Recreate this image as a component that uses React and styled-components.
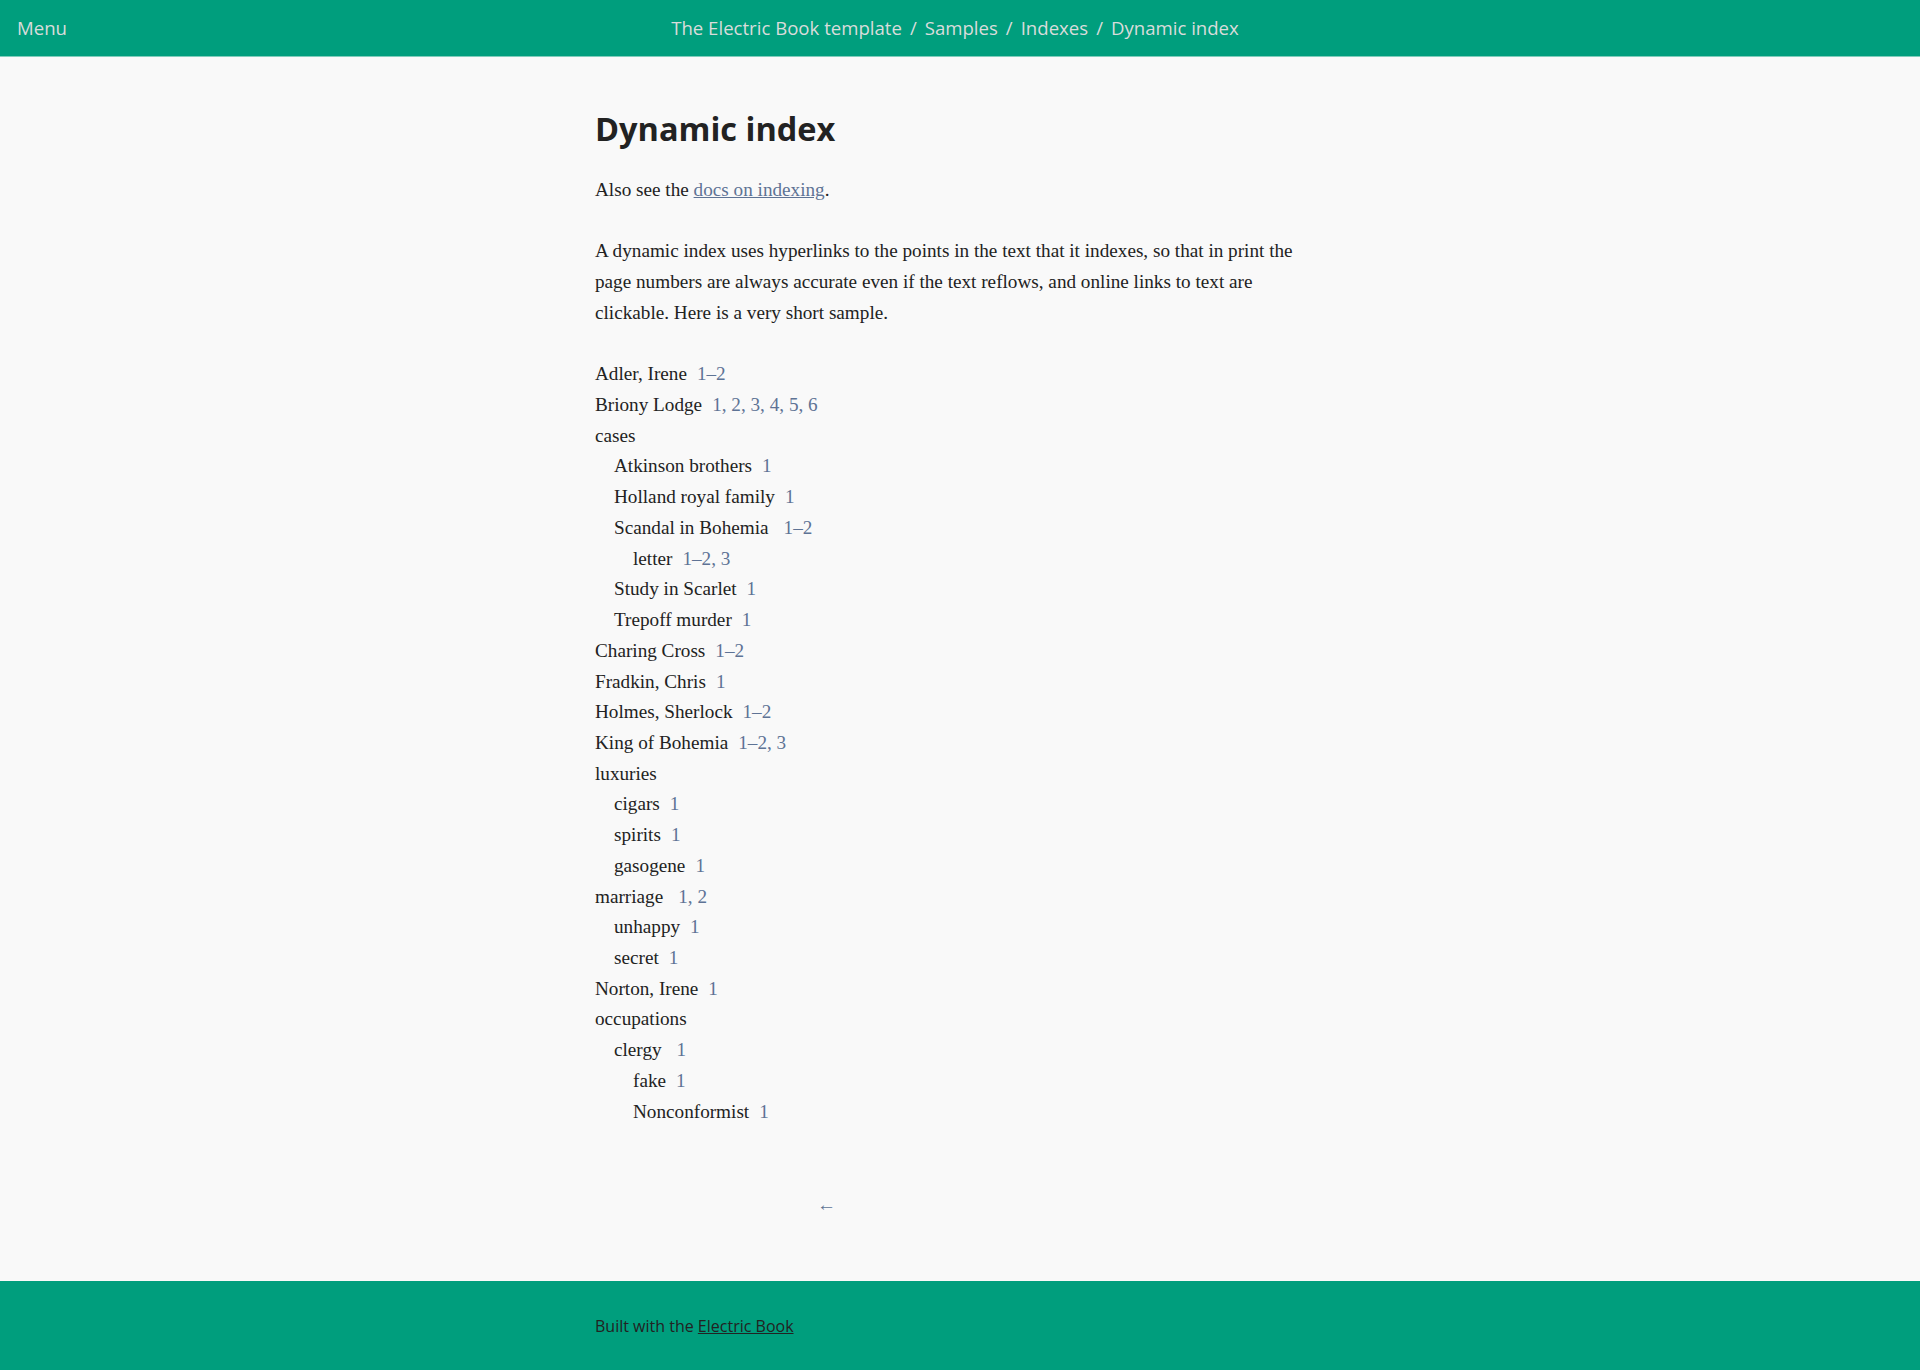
import React from 'react'
import styled, { createGlobalStyle } from 'styled-components'

const GlobalStyle = createGlobalStyle`
    html, body {
        margin: 0;
        padding: 0;
        background: #f9f9f9;
    }
    body {
        font-family: "Liberation Serif", "Times New Roman", serif;
        color: #222222;
    }
`

const green = '#009e7d'
const linkColor = '#5e7395'

const entries = [
    { level: 0, term: 'Adler, Irene', refs: '1–2' },
    { level: 0, term: 'Briony Lodge', refs: '1, 2, 3, 4, 5, 6' },
    { level: 0, term: 'cases' },
    { level: 1, term: 'Atkinson brothers', refs: '1' },
    { level: 1, term: 'Holland royal family', refs: '1' },
    { level: 1, term: 'Scandal in Bohemia', refs: '1–2', wide: true },
    { level: 2, term: 'letter', refs: '1–2, 3' },
    { level: 1, term: 'Study in Scarlet', refs: '1' },
    { level: 1, term: 'Trepoff murder', refs: '1' },
    { level: 0, term: 'Charing Cross', refs: '1–2' },
    { level: 0, term: 'Fradkin, Chris', refs: '1' },
    { level: 0, term: 'Holmes, Sherlock', refs: '1–2' },
    { level: 0, term: 'King of Bohemia', refs: '1–2, 3' },
    { level: 0, term: 'luxuries' },
    { level: 1, term: 'cigars', refs: '1' },
    { level: 1, term: 'spirits', refs: '1' },
    { level: 1, term: 'gasogene', refs: '1' },
    { level: 0, term: 'marriage', refs: '1, 2', wide: true },
    { level: 1, term: 'unhappy', refs: '1' },
    { level: 1, term: 'secret', refs: '1' },
    { level: 0, term: 'Norton, Irene', refs: '1' },
    { level: 0, term: 'occupations' },
    { level: 1, term: 'clergy', refs: '1', wide: true },
    { level: 2, term: 'fake', refs: '1' },
    { level: 2, term: 'Nonconformist', refs: '1' },
]

function App() {
    return (
        <Page>
            <GlobalStyle />
            <Header>
                <MenuButton>Menu</MenuButton>
                <Breadcrumbs>
                    <Crumb>The Electric Book template</Crumb>
                    <Sep>/</Sep>
                    <Crumb>Samples</Crumb>
                    <Sep>/</Sep>
                    <Crumb>Indexes</Crumb>
                    <Sep>/</Sep>
                    <Crumb>Dynamic index</Crumb>
                </Breadcrumbs>
            </Header>

            <Main>
                <Title>Dynamic index</Title>
                <Para>Also see the <TextLink href="#">docs on indexing</TextLink>.</Para>
                <Para>
                    A dynamic index uses hyperlinks to the points in the text that it indexes, so that in print the
                    page numbers are always accurate even if the text reflows, and online links to text are
                    clickable. Here is a very short sample.
                </Para>

                <IndexList>
                    {entries.map((e, i) => (
                        <Entry key={i} level={e.level}>
                            {e.term}
                            {e.refs ? <Refs wide={e.wide}>{e.refs}</Refs> : null}
                        </Entry>
                    ))}
                </IndexList>

                <Nav>
                    <Arrow href="#">←</Arrow>
                </Nav>
            </Main>

            <Footer>
                <FooterInner>
                    Built with the <FooterLink href="#">Electric Book</FooterLink>
                </FooterInner>
            </Footer>
        </Page>
    )
}

const Page = styled.div`
    display: flex;
    flex-direction: column;
    min-height: 1370px;
`

const Header = styled.header`
    position: relative;
    height: 56px;
    background: ${green};
    border-bottom: 1px solid #7fcdbc;
    display: flex;
    align-items: center;
    justify-content: center;
    font-family: "Open Sans", "Noto Sans", sans-serif;
    color: #d9dcdb;
`

const MenuButton = styled.div`
    position: absolute;
    left: 17px;
    top: 15px;
    font-size: 18.6px;
    cursor: pointer;
`

const Breadcrumbs = styled.nav`
    display: flex;
    gap: 8px;
    font-size: 18.6px;
    margin: -2px 10px 0 0;
`

const Crumb = styled.span``

const Sep = styled.span``

const Main = styled.main`
    flex: 1;
    width: 730px;
    margin: 0 auto;
    padding-top: 50px;
    font-size: 19.2px;
    line-height: 1.6;
`

const Title = styled.h1`
    font-family: "Open Sans", "Noto Sans", sans-serif;
    font-weight: 700;
    font-size: 32.5px;
    line-height: 44px;
    margin: 0 0 24px;
    color: #222222;
`

const Para = styled.p`
    max-width: 715px;
    margin: 0 0 1.6em;
`

const TextLink = styled.a`
    color: ${linkColor};
    text-decoration: underline;
`

const IndexList = styled.div`
    margin: 0;
`

const Entry = styled.div`
    padding-left: ${p => p.level * 19}px;
`

const Refs = styled.span`
    color: ${linkColor};
    margin-left: ${p => (p.wide ? 15 : 10)}px;
`

const Nav = styled.div`
    padding: 62px 0 0 222px;
`

const Arrow = styled.a`
    color: ${linkColor};
    text-decoration: none;
    font-family: "Open Sans", "Noto Sans", sans-serif;
    font-size: 19px;
`

const Footer = styled.footer`
    height: 89px;
    background: ${green};
    display: flex;
    align-items: center;
`

const FooterInner = styled.div`
    width: 730px;
    margin: 0 auto;
    font-family: "Open Sans", "Noto Sans", sans-serif;
    font-size: 16px;
    color: #222222;
`

const FooterLink = styled.a`
    color: #222222;
    text-decoration: underline;
`

export default App
